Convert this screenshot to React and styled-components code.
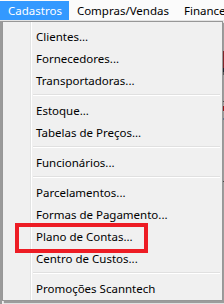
import React from "react";
import styled, { createGlobalStyle } from "styled-components";

const GlobalStyle = createGlobalStyle`
  html, body {
    margin: 0;
    padding: 0;
    background: #d8d8d8;
  }
  body {
    font-family: "Noto Sans", "Open Sans", sans-serif;
    font-size: 11.5px;
    color: #000;
  }
`;

const Screen = styled.div`
  position: relative;
  width: 224px;
  height: 304px;
  overflow: hidden;
  display: flex;
  flex-direction: column;
  background: #d8d8d8;
`;

const MenuBar = styled.div`
  display: flex;
  height: 20px;
  background: #fbfbfb;
  border-bottom: 1px solid #e4e4e4;
  flex-shrink: 0;
`;

const MenuTitle = styled.div`
  display: flex;
  align-items: center;
  padding: 0 7px 0 8px;
  margin-top: 1px;
  white-space: nowrap;
  background: ${(p) => (p.$active ? "#3399ff" : "transparent")};
  color: ${(p) => (p.$active ? "#fff" : "#000")};
`;

const Backdrop = styled.div`
  position: relative;
  flex: 1;
  background: linear-gradient(to right, #9a9a9a 0 2px, #f0f0f0 2px);
`;

const Stripe = styled.div`
  position: absolute;
  right: 0;
  width: 6px;
  background: ${(p) => p.$color};
`;

const Dropdown = styled.div`
  position: absolute;
  top: 21px;
  left: 2px;
  width: 215px;
  padding: 3px 2px 1px;
  border: 1px solid #979797;
  background: linear-gradient(
    to right,
    #f0f0f0 0 27px,
    #e2e3e3 27px 28px,
    #ffffff 28px 29px,
    #f0f0f0 29px
  );
  box-shadow: 2px 2px 1px rgba(0, 0, 0, 0.35);
`;

const Item = styled.div`
  height: 22px;
  display: flex;
  align-items: center;
  padding-left: 31px;
  white-space: nowrap;
`;

const Separator = styled.div`
  height: 8px;
  display: flex;
  align-items: center;
  padding-left: 28px;

  &::after {
    content: "";
    flex: 1;
    height: 1px;
    background: #e0e0e0;
    border-bottom: 1px solid #ffffff;
  }
`;

const Marker = styled.div`
  position: absolute;
  left: 15px;
  top: 223px;
  width: 133px;
  height: 30px;
  box-sizing: border-box;
  border: 4px solid #ed1c24;
`;

const groups = [
  ["Clientes...", "Fornecedores...", "Transportadoras..."],
  ["Estoque...", "Tabelas de Preços..."],
  ["Funcionários..."],
  ["Parcelamentos...", "Formas de Pagamento...", "Plano de Contas...", "Centro de Custos..."],
  ["Promoções Scanntech"],
];

const stripes = [
  { top: 30, height: 17, color: "#c23a3f" },
  { top: 47, height: 4, color: "#2e3a4a" },
  { top: 51, height: 3, color: "#8a8a8a" },
  { top: 80, height: 1, color: "#7a7a7a" },
  { top: 84, height: 7, color: "#ffffff" },
  { top: 85, height: 5, color: "#e0202a" },
  { top: 97, height: 2, color: "#9bb7d8" },
  { top: 160, height: 1, color: "#707070" },
];

export default function App() {
  return (
    <>
      <GlobalStyle />
      <Screen>
        <MenuBar>
          <MenuTitle $active>Cadastros</MenuTitle>
          <MenuTitle>Compras/Vendas</MenuTitle>
          <MenuTitle>Financeiro</MenuTitle>
        </MenuBar>
        <Backdrop>
          {stripes.map((s, i) => (
            <Stripe key={i} $color={s.color} style={{ top: s.top, height: s.height }} />
          ))}
        </Backdrop>
        <Dropdown>
          {groups.map((group, gi) => (
            <React.Fragment key={gi}>
              {gi > 0 && <Separator />}
              {group.map((label) => (
                <Item key={label}>{label}</Item>
              ))}
            </React.Fragment>
          ))}
        </Dropdown>
        <Marker />
      </Screen>
    </>
  );
}
